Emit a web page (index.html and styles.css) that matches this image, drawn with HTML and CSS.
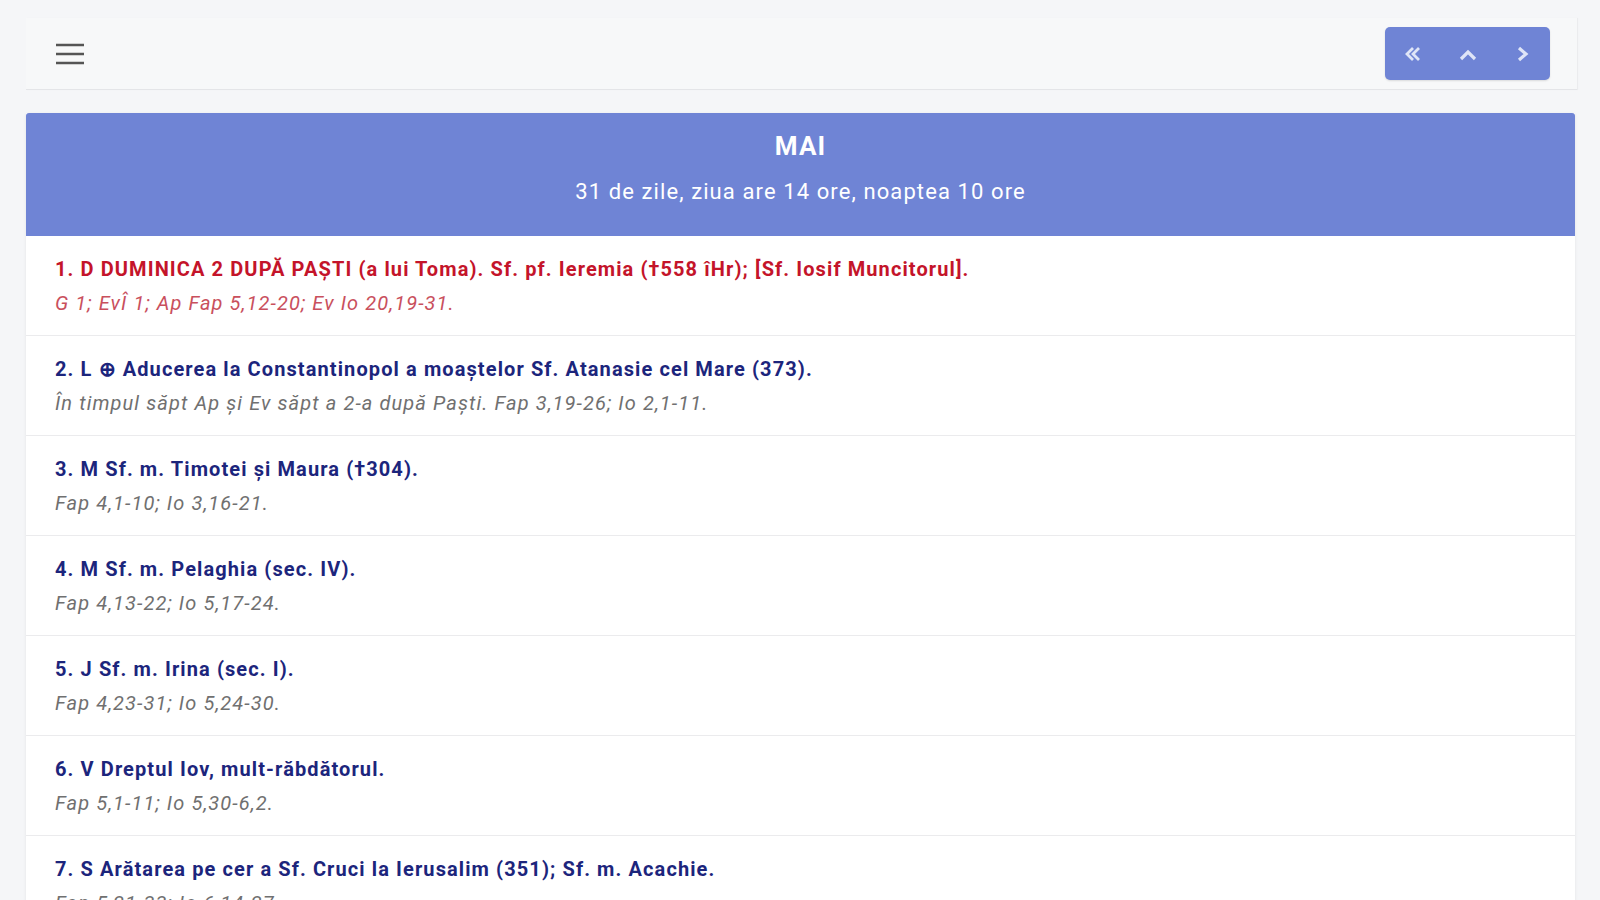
FILE: index.html
```html
<!DOCTYPE html>
<html lang="ro">
<head>
  <meta charset="UTF-8"/>
  <meta name="viewport" content="width=device-width,initial-scale=1.0"/>
  <title>Calendar ortodox - Mai</title>
  <link rel="stylesheet" href="styles.css">
</head>
<body>

  <header class="toolbar">
    <button class="menu-btn" aria-label="Meniu">
      <svg width="28" height="24" viewBox="0 0 28 24">
        <path d="M0 3h28M0 12h28M0 21h28" stroke="#555" stroke-width="2.4" fill="none"/>
      </svg>
    </button>

    <nav class="month-nav">
      <button aria-label="Luna anterioară">
        <svg width="18" height="18" viewBox="0 0 18 18">
          <path d="M9 3L3 9l6 6M15 3L9 9l6 6" stroke="#dfe5f7" stroke-width="2.8" fill="none"/>
        </svg>
      </button>
      <button aria-label="Sus">
        <svg width="20" height="18" viewBox="0 0 20 18">
          <path d="M3 14l7-7 7 7" stroke="#dfe5f7" stroke-width="3.2" fill="none"/>
        </svg>
      </button>
      <button aria-label="Luna următoare">
        <svg width="18" height="18" viewBox="0 0 18 18">
          <path d="M5 3l7 6-7 6" stroke="#dfe5f7" stroke-width="3.2" fill="none"/>
        </svg>
      </button>
    </nav>
  </header>

  <main class="month">
    <div class="month-head">
      <h2>MAI</h2>
      <p>31 de zile, ziua are 14 ore, noaptea 10 ore</p>
    </div>

    <ul class="days">
      <li class="day red">
        <div class="day-title">1. D DUMINICA 2 DUPĂ PAŞTI (a lui Toma). Sf. pf. Ieremia (†558 îHr); [Sf. Iosif Muncitorul].</div>
        <div class="day-read">G 1; EvÎ 1; Ap Fap 5,12-20; Ev Io 20,19-31.</div>
      </li>
      <li class="day">
        <div class="day-title">2. L ⊕ Aducerea la Constantinopol a moaştelor Sf. Atanasie cel Mare (373).</div>
        <div class="day-read">În timpul săpt Ap şi Ev săpt a 2-a după Paşti. Fap 3,19-26; Io 2,1-11.</div>
      </li>
      <li class="day">
        <div class="day-title">3. M Sf. m. Timotei şi Maura (†304).</div>
        <div class="day-read">Fap 4,1-10; Io 3,16-21.</div>
      </li>
      <li class="day">
        <div class="day-title">4. M Sf. m. Pelaghia (sec. IV).</div>
        <div class="day-read">Fap 4,13-22; Io 5,17-24.</div>
      </li>
      <li class="day">
        <div class="day-title">5. J Sf. m. Irina (sec. I).</div>
        <div class="day-read">Fap 4,23-31; Io 5,24-30.</div>
      </li>
      <li class="day">
        <div class="day-title">6. V Dreptul Iov, mult-răbdătorul.</div>
        <div class="day-read">Fap 5,1-11; Io 5,30-6,2.</div>
      </li>
      <li class="day">
        <div class="day-title">7. S Arătarea pe cer a Sf. Cruci la Ierusalim (351); Sf. m. Acachie.</div>
        <div class="day-read">Fap 5,21-33; Io 6,14-27.</div>
      </li>
    </ul>
  </main>

</body>
</html>
```

FILE: styles.css
```css
:root {
  --bg-page:    #f5f6f8;
  --bar-bg:     #f7f8f9;
  --indigo:     #6f84d5;
  --navy:       #1c257c;
  --red:        #c4142a;
  --red-soft:   #c9505d;
  --grey-text:  #707070;
  --line:       #ebebed;
}
* { margin:0; padding:0; box-sizing:border-box; }
html, body {
  height:100vh; overflow:hidden;
  font-family:Roboto,'Noto Sans',sans-serif;
  background:var(--bg-page);
}

/* ─── TOOLBAR ───────────────────────── */
.toolbar {
  display:flex; align-items:center; justify-content:space-between;
  height:72px; margin:18px 23px 0 26px;
  padding:0 27px 0 30px;
  background:var(--bar-bg);
  border-bottom:1px solid #e4e5e8;
  box-shadow:1px 0 1px rgba(0,0,0,0.04);
}
.menu-btn {
  display:flex; background:none; border:none; cursor:pointer;
}
.month-nav {
  display:flex;
  background:var(--indigo);
  border-radius:5px;
  box-shadow:0 1px 2px rgba(0,0,0,0.12);
}
.month-nav button {
  width:55px; height:53px;
  display:flex; align-items:center; justify-content:center;
  background:none; border:none; cursor:pointer;
}

/* ─── MONTH CARD ────────────────────── */
.month {
  margin:23px 25px 0 26px;
  background:#fff;
  box-shadow:0 1px 3px rgba(0,0,0,0.08);
}
.month-head {
  height:123px;
  padding-top:17px;
  background:var(--indigo);
  color:#fff;
  text-align:center;
  letter-spacing:1.1px;
  border-radius:3px 3px 0 0;
}
.month-head h2 {
  font-size:26px; line-height:32px; font-weight:700;
  margin-bottom:16px;
}
.month-head p {
  font-size:22px; line-height:28px;
}

/* ─── DAYS ──────────────────────────── */
.days { list-style:none; }
.day {
  padding:20px 29px 19px;
  border-bottom:1px solid var(--line);
  display:flex; flex-direction:column; gap:8px;
  letter-spacing:1.1px;
}
.day-title {
  font-size:20px; line-height:26px; font-weight:700;
  color:var(--navy);
}
.day-read {
  font-size:20px; line-height:26px; font-style:italic;
  color:var(--grey-text);
}
.day.red .day-title { color:var(--red); }
.day.red .day-read { color:var(--red-soft); }
```
